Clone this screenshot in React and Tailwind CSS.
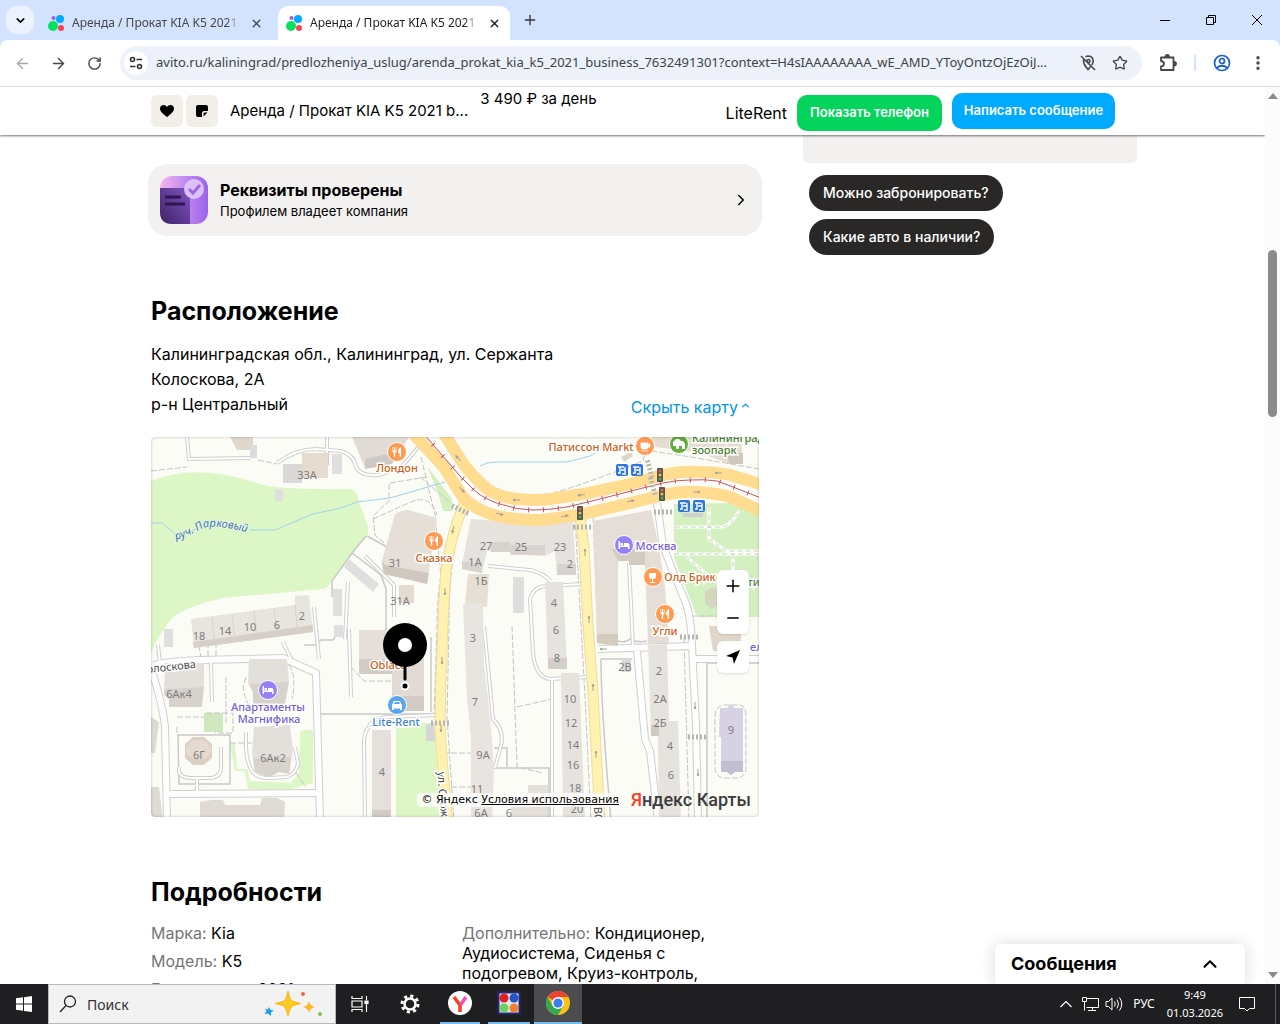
import { ChevronDown, ChevronRight, ChevronUp, Plus, Minus, Star, RotateCw, ArrowLeft, ArrowRight, X, EllipsisVertical } from "lucide-react";

const MAIN_ROAD = {
	upper: "M290 -8 L309 22 Q318 36 336 52 Q350 61 366 62 Q385 64 399 62 L432 57 L479 47 L512 38 Q530 34 546 35 Q565 35 579 38 L612 48",
	lower: "M258 -8 L292 29 L312 60 Q320 69 332 74 Q348 81 366 82 Q385 84 399 82 L432 77 L479 66 L512 58 Q530 54 546 55 Q565 56 579 60 L612 75",
	tram: "M272 -4 L309 39 L324 54 Q335 63 349 67 Q366 73 382 73 Q398 73 416 70 L449 62 L492 51 L512 46 Q526 43 539 43 Q553 42 566 44 L582 50 L610 61",
};

const YELLOW_STREETS = [
	"M314 66 Q302 90 295 132 Q293 160 292 189 L290 239 L289 289 Q291 330 297 384",
	"M429 80 L433 110 L437 189 L442 256 L449 384",
];

const WHITE_STREETS = [
	"M506 66 L512 109 Q522 135 532 159 Q540 175 541 209 L545 289 L547 384",
	"M447 212 L541 209",
	"M481 189 L482 211",
	"M486 214 L494 302 L499 314 L507 384",
	"M544 222 L610 222",
	"M4 228 Q8 225 49 223 L132 221 L165 236 L169 384",
	"M0 232 Q10 260 14 289 L16 384",
	"M16 357 L167 356",
	"M379 162 L382 215 Q384 240 399 242 L439 240",
	"M401 242 L401 384",
	"M333 189 L342 282 Q355 295 349 312 L344 331",
	"M36 0 L38 22 L99 21",
	"M126 26 Q145 12 165 12 L190 14 Q203 18 205 30 Q210 40 228 38 L250 30 Q258 22 268 9",
	"M214 119 L243 148",
	"M243 148 L243 180",
	"M337 129 L379 133 Q393 136 399 144",
	"M379 162 Q383 149 396 149 L432 147",
	"M197 145 L194 202",
	"M198 192 L200 260",
	"M218 290 Q213 295 213 305 L214 384",
	"M218 289 Q222 281 236 280 L286 278",
	"M95 295 Q94 320 99 330 Q103 341 117 341 L136 340 Q146 336 147 326 L144 310",
	"M478 126 L481 189",
	"M60 226 L61 265",
	"M132 205 L140 222",
	"M28 330 V335 Q30 341 40 341 H60 Q70 340 70 330 V310",
	"M46 341 V356",
	"M176 0 V28",
	"M163 170 L168 222",
	"M7 208 L9 226",
];

// everything up to this index, apart from the short link, is a full-width street
const WIDE_STREETS = 8;

const THIN_LINES = [
	"M169 277 L286 277",
	"M215 99 L201 116 L181 144 L181 160",
	"M216 99 L236 110",
	"M201 116 L230 138 L235 152 L235 200",
	"M27 298 H79 V347 H28 Z",
	"M450 222 H481 M450 222 Q450 270 460 384",
	"M556 226 V384",
	"M337 331 H398 V384",
	"M343 311 H356 V330",
	"M280 200 V275",
	"M555 226 H608",
	"M153 208 H164 L170 203 H182 L185 198 H192",
	"M467 204 Q475 206 479 202 Q486 206 496 204",
];

const DASHED_LINES = [
	"M300 92 Q286 140 286 189 L283 280",
	"M310 80 Q298 125 298 189 L296 280 L303 384",
	"M424 80 L434 260 L440 384",
	"M442 80 L447 200",
	"M0 34 L36 30 M107 23 L126 27",
	"M270 20 L284 78 L290 140",
	"M239 46 L276 40 M238 47 L238 64 L222 79 L224 98 L233 106 M222 82 L262 64 Q280 58 286 78",
	"M361 189 L366 330 L392 336",
	"M366 270 L401 262",
	"M533 200 L538 384",
	"M57 205 L57 230 M65 205 L65 226 M75 240 V288 M26 290 V298 M26 280 H53",
	"M338 56 Q360 60 399 57 Q440 45 492 24 L495 14 M500 14 L540 20 L608 32",
	"M318 60 Q350 82 399 84 L440 80",
	"M564 280 Q564 270 572 268 H588 Q595 268 595 280 V330 Q595 341 585 341 H574 Q564 341 564 330 Z",
	"M540 179 L578 179",
	"M292 316 H330 M300 350 H320",
	"M200 230 L213 244 L240 244 L245 236",
	"M79 306 H105",
	"M55 276 H82 V296 H64 M95 240 L92 250 Q94 262 98 268 M138 228 Q146 240 141 262",
	"M145 336 L155 350 M48 208 L50 222",
	"M269 40 L300 66",
];

const BUILDINGS = [
	{ points: "79,0 102,0 102,13 86,13", fill: "#e0d8cc" },
	{ points: "99,8 106,8 106,21 99,21", fill: "#dcdcdc" },
	{ points: "151,16 177,16 177,41 151,41", fill: "#e5dccf" },
	{ points: "132,27 151,27 151,46 132,46", fill: "#dbd8d8" },
	{ points: "181,17 191,17 191,37 181,37", fill: "#dfdfdf" },
	{ points: "124,52 132,52 132,64 124,64", fill: "#dedede" },
	{ points: "201,0 258,0 241,27 214,31", fill: "#e0dbd5" },
	{ points: "214,22 246,15 241,27 214,32", fill: "#cec9c4" },
	{ points: "244,77 250,74 257,73 286,81 276,146 232,137 231,124", fill: "#e6dfd7" },
	{ points: "231,124 234,128 278,136 276,147 233,137", fill: "#d0c7bf" },
	{ points: "248,148 263,148 263,166 248,166", fill: "#e5dccf" },
	{ points: "198,122 228,147 222,155 193,130", fill: "#dfdfdf" },
	{ points: "182,152 191,152 191,179 182,179", fill: "#dfdfdf" },
	{ points: "40,182 144,168 144,159 158,158 162,195 43,211", fill: "#e8e4de" },
	{ points: "42,205 162,188 162,195 43,211", fill: "#d6cfc8" },
	{ points: "13,192 22,192 22,210 13,210", fill: "#dfdfdf" },
	{ points: "183,188 192,188 192,200 183,200", fill: "#dfdfdf" },
	{ points: "14,226 53,226 53,252 50,258 50,270 18,270 18,262 13,255", fill: "#e3dfda" },
	{ points: "14,252 53,250 51,270 18,270 18,262 13,258", fill: "#d8d2cd" },
	{ points: "98,222 136,222 138,245 134,252 134,267 102,267 102,255 97,246", fill: "#e3dfda" },
	{ points: "98,247 138,245 134,267 102,267 102,255", fill: "#d8d2cd" },
	{ points: "42,300 53,300 61,307 61,321 53,328 42,328 34,321 34,307", fill: "#dccfc5" },
	{ points: "42,303 53,303 60,310 60,316 53,322 42,322 35,316 35,310", fill: "#e4dad0" },
	{ points: "103,290 139,288 142,314 138,337 128,335 118,340 104,335 101,315", fill: "#e3dfda" },
	{ points: "102,322 140,320 138,337 128,335 118,340 104,335", fill: "#d8d2cd" },
	{ points: "49,365 60,363 72,363 74,368 109,368 111,361 126,361 134,365 133,384 49,384", fill: "#e0dad5" },
	{ points: "0,280 8,285 4,316 0,316", fill: "#dedad6" },
	{ points: "0,350 8,350 12,384 0,384", fill: "#dedad6" },
	{ points: "221,293 240,293 240,384 221,384", fill: "#e6e0dc" },
	{ points: "221,373 240,373 240,384 221,384", fill: "#d2cbc7" },
	{ points: "208,193 241,193 241,237 208,237", fill: "#e6dfd8" },
	{ points: "208,222 241,222 241,237 208,237", fill: "#d3cbc5" },
	{ points: "241,196 273,196 273,274 241,274", fill: "#e1dad5" },
	{ points: "241,259 273,259 273,274 241,274", fill: "#d3cbc5" },
	{ points: "275,288 283,286 284,304 275,304", fill: "#d6d6d6" },
	{ points: "320,82 366,85 422,85 425,137 406,137 404,114 394,119 360,117 359,114 336,114 331,136 311,132 312,122", fill: "#e6e2dd" },
	{ points: "340,105 359,105 359,108 394,108 394,118 360,118 359,115 340,115", fill: "#d8d3ce" },
	{ points: "406,127 425,127 425,138 406,138", fill: "#d8d3ce" },
	{ points: "311,124 331,128 331,136 311,132", fill: "#d8d3ce" },
	{ points: "317,137 338,137 336,170 314,167", fill: "#e6dfd4" },
	{ points: "312,167 332,167 333,228 337,261 340,292 343,331 341,384 320,384 320,300 316,262", fill: "#e8e4df" },
	{ points: "362,140 373,140 373,176 362,176", fill: "#dedede" },
	{ points: "394,145 412,145 416,231 397,231", fill: "#e6e2dd" },
	{ points: "397,221 416,221 416,232 397,232", fill: "#d4cfca" },
	{ points: "410,236 428,236 434,384 412,384", fill: "#e6e2dd" },
	{ points: "377,348 397,348 397,384 360,384 360,370 377,370", fill: "#e6e0da" },
	{ points: "442,84 500,73 508,110 514,150 518,206 497,206 494,128 467,122 467,209 446,206", fill: "#e5ded6" },
	{ points: "461,112 494,112 494,128 478,128 478,124 467,124", fill: "#d3cac0" },
	{ points: "446,197 467,197 467,209 446,206", fill: "#d3cac0" },
	{ points: "497,208 516,207 518,284 527,284 530,384 508,384 507,298 500,298", fill: "#e6e2dd" },
	{ points: "500,288 508,288 508,299 500,299", fill: "#d0cac5" },
	{ points: "471,222 480,222 480,235 471,235", fill: "#d8d8d8" },
	{ points: "558,189 590,189 590,214 562,214", fill: "#e0d6ca" },
	{ points: "569,271 576,271 580,267 584,271 592,271 592,335 584,335 580,338 576,335 570,335 570,300 568,300", fill: "#d6d2e3" },
	{ points: "570,324 592,324 592,335 584,335 580,338 576,335 570,335", fill: "#c3bfd2" },
	{ points: "500,0 590,0 592,27 578,27 550,16 505,10", fill: "#e3dccf" },
	{ points: "576,16 592,16 592,27 578,27", fill: "#cfc8bd" },
	{ points: "470,20 480,15 482,19 473,25", fill: "#dcd6cc" },
	{ points: "532,76 552,76 552,80 532,80", fill: "#cfcfcf" },
	{ points: "554,154 562,150 568,155 568,168 560,172 554,167", fill: "#d5d6c0" },
];

const HOUSE_NUMBERS = [
	["33А", 156, 42], ["31", 244, 130], ["31А", 249, 168], ["27", 335, 113], ["25", 370, 114], ["23", 409, 114],
	["1А", 324, 129], ["2", 419, 131], ["1Б", 330, 148], ["4", 403, 170], ["3", 322, 205], ["6", 405, 197],
	["8", 406, 225], ["2", 151, 183], ["6", 126, 192], ["10", 99, 194], ["14", 74, 198], ["18", 48, 203],
	["7", 324, 269], ["9А", 332, 322], ["11", 326, 356], ["10", 419, 266], ["12", 420, 290], ["14", 422, 312],
	["16", 422, 332], ["18", 424, 355], ["20", 426, 376], ["6А", 330, 380], ["6", 358, 380], ["2В", 474, 234],
	["2", 508, 238], ["2А", 509, 266], ["2Б", 509, 290], ["4", 519, 313], ["6", 520, 342], ["9", 580, 297],
	["6Ак4", 28, 261], ["6Г", 48, 322], ["6Ак2", 122, 325], ["4", 231, 339],
];

const PLACES = [
	{ name: "Лондон", x: 246, y: 35, cx: 246, cy: 15, kind: "food" },
	{ name: "Сказка", x: 283, y: 125, cx: 283, cy: 104, kind: "food" },
	{ name: "Угли", x: 514, y: 198, cx: 514, cy: 177, kind: "food" },
	{ name: "Патиссон Markt", x: 440, y: 14, cx: 494, cy: 9, kind: "cafe" },
	{ name: "Олд Брик", x: 539, y: 144, cx: 502, cy: 140, kind: "bar" },
	{ name: "Москва", x: 505, y: 113, cx: 473, cy: 108, kind: "hotel" },
	{ name: "Апартаменты", x: 117, y: 274, cx: 117, cy: 253, kind: "hotel" },
	{ name: "Lite-Rent", x: 245, y: 289, cx: 246, cy: 268, kind: "car" },
];

const PLACE_COLORS = {
	food: ["#ff9a52", "#d0601a"],
	cafe: ["#ff9a52", "#d0601a"],
	bar: ["#ff9a52", "#d0601a"],
	hotel: ["#9580f5", "#7660d8"],
	car: ["#5aa5f0", "#3a86d0"],
};

const PLACE_GLYPHS = {
	food: <path d="M-4.500 -5 V-1 Q-4.500 0.500 -3.200 0.500 V5 H-1.800 V0.500 Q-0.500 0.500 -0.500 -1 V-5 H-1.300 V-1.500 H-2.100 V-5 H-2.900 V-1.500 H-3.700 V-5 Z M4 -5 Q1 -4 1 1 H2.600 V5 H4 Z" fill="#fff" />,
	cafe: <path d="M-4 -3 h7 v4 q0 2 -2 2 h-3 q-2 0 -2 -2 z M3 -2 h2 v3 h-2 M-4 5 h7" fill="#fff" stroke="#fff" strokeWidth="0.800" />,
	bar: <path d="M-4 -4 h7 v3 q0 3 -3 3 v3 h2 v1 h-5 v-1 h2 v-3 q-3 0 -3 -3 z" fill="#fff" />,
	hotel: <path d="M-5.500 -4 V4 H-4 V2 H4 V4 H5.500 V0 Q5.500 -2 3.500 -2 H0 V0.500 H-4 V-4 Z M-3.500 -2 h2.500 v2 h-2.500 z" fill="#fff" />,
	car: <path d="M-5 0 l2 -4 h6 l2 4 v5 h-2 v-1.500 h-6 v1.500 h-2 z M-3 -1 h6 l-1 -2 h-4 z" fill="#fff" fillRule="evenodd" />,
};

const TRAFFIC_LIGHTS = [[509, 38], [511, 57], [429, 76]];
const TRAM_STOPS = [[471, 33], [486, 33], [533, 69], [548, 69]];
const CROSSINGS = [[426, 90, 0], [304, 73, 25], [493, 33, 75], [496, 50, 75], [507, 75, 0], [284, 286, 0], [533, 200, 0], [541, 300, 0]];
const ROAD_ARROWS = [[294, 155, 180], [291, 224, 180], [290, 292, 180], [302, 93, 195], [434, 115, 0], [438, 182, 0], [442, 250, 0], [445, 317, 0], [307, 21, -45], [311, 53, 135], [349, 77, 105], [414, 79, 80], [480, 64, 80], [365, 63, -90], [430, 58, -97], [546, 55, 90], [567, 36, -90], [544, 269, 180], [547, 336, 180], [452, 212, -90]];

const isWide = (i) => i < WIDE_STREETS && i !== 2;

function CityMap() {
	return (
		<svg viewBox="0 0 608 380" preserveAspectRatio="xMidYMid slice" className="block h-full w-full font-['Noto_Sans',sans-serif]">
			<rect width="608" height="380" fill="#fbfcf6" />
			<path d="M0 44 Q28 33 60 36 Q82 38 109 47 Q130 53 199 52 Q206 53 208 65 L217 89 Q218 96 216 99 L201 116 L181 144 Q177 151 172 152 L72 161 Q42 168 26 177 Q14 186 0 215 Z" fill="#dcf7c5" />
			<path d="M523 67 L580 66 Q598 68 608 79 V180 H546 L523 120 Z M276 29 L301 62 L302 74 L292 74 L287 56 Z" fill="#d5f0c0" />
			<path d="M245 286 H283 L290 384 H245 Z M149 296 Q150 293 154 293 H159 Q162 293 162 296 V346 L140 352 H97 L94 334 H84 L79 306 H84 L86 332 H96 L99 344 L140 346 L148 336 Z" fill="#dcf7c5" />
			<path d="M53 276 H72 V295 H53 Z" fill="#cfe8c0" />
			<path d="M524 90 H572 Q582 86 588 74 M558 70 V102 L576 114 H608 M523 117 H608 M582 117 V145 M535 119 L570 150" fill="none" stroke="#fff" strokeWidth="3" />
			<path d="M524 90 H572 Q582 86 588 74 M558 70 V102 L576 114 H608 M523 117 H608 M582 117 V145 M535 119 L570 150" fill="none" stroke="#c2d0b8" strokeWidth="1" strokeDasharray="5 3" />
			<path d="M0 86 H11 L24 97 L40 95 Q60 80 70 86 M99 93 H124 L162 77 L190 71 L206 65 L239 61 L294 45 M329 29 Q335 25 345 25 H416 L439 19 L456 9" fill="none" stroke="#9fd0f0" strokeWidth="1" />
			{THIN_LINES.map((d) => (
				<path key={d} d={d} fill="none" stroke="#c9c9c9" strokeWidth="1.500" />
			))}
			{DASHED_LINES.map((d) => (
				<path key={d} d={d} fill="none" stroke="#c4c4c4" strokeWidth="1" strokeDasharray="6 2" />
			))}
			{WHITE_STREETS.map((d, i) => (
				<path key={d} d={d} fill="none" stroke="#cfcfcf" strokeWidth={isWide(i) ? 8 : 4} />
			))}
			{WHITE_STREETS.map((d, i) => (
				<path key={d} d={d} fill="none" stroke="#ffffff" strokeWidth={isWide(i) ? 6 : 2} />
			))}
			{BUILDINGS.map((b) => (
				<polygon key={b.points} points={b.points} fill={b.fill} />
			))}
			<path d="M61 180 L64 208 M81 177 L84 205 M103 174 L106 202 M123 171 L127 199 M144 168 L147 197" stroke="#d8d3cd" strokeWidth="1" />
			{YELLOW_STREETS.map((d) => (
				<g key={d} fill="none">
					<path d={d} stroke="#eedc9c" strokeWidth="11" />
					<path d={d} stroke="#fff2b0" strokeWidth="9" />
				</g>
			))}
			<path d={MAIN_ROAD.tram} fill="none" stroke="#fcfcf8" strokeWidth="18" />
			<path d={MAIN_ROAD.upper} fill="none" stroke="#ffdc90" strokeWidth="12" />
			<path d={MAIN_ROAD.lower} fill="none" stroke="#ffdc90" strokeWidth="12" />
			<path d={MAIN_ROAD.tram} fill="none" stroke="#c95560" strokeWidth="1" />
			<path d={MAIN_ROAD.tram} fill="none" stroke="#c95560" strokeWidth="5" strokeDasharray="1 14" />
			{CROSSINGS.map(([x, y, r]) => (
				<path key={`${x}-${y}`} transform={`rotate(${r} ${x + 6} ${y})`} d={`M${x - 4} ${y} h20`} stroke="#b5b5b5" strokeWidth="5" strokeDasharray="2 2" />
			))}
			{ROAD_ARROWS.map(([x, y, r]) => (
				<path key={`${x}-${y}`} transform={`translate(${x} ${y}) rotate(${r})`} d="M0 4 V-1 M-1 -1 L0 -3 L1 -1 Z" fill="#9a9a90" stroke="#a5a598" strokeWidth="1" />
			))}
			<g fontSize="11" fill="#7d7d7d" textAnchor="middle">
				{HOUSE_NUMBERS.map(([label, x, y]) => (
					<text key={`${label}-${x}-${y}`} x={x} y={y}>{label}</text>
				))}
			</g>
			{TRAM_STOPS.map(([x, y]) => (
				<g key={`${x}-${y}`} transform={`translate(${x} ${y})`}>
					<rect x="-6" y="-6" width="12" height="12" rx="2" fill="#2f75e0" />
					<path d="M-4 -3 H2 M-2 -3 V3 H-4 M-1 0 H3 M3 -3 V3 M0 4 H4" fill="none" stroke="#fff" strokeWidth="1.400" />
				</g>
			))}
			{TRAFFIC_LIGHTS.map(([x, y]) => (
				<g key={`${x}-${y}`} transform={`translate(${x} ${y})`}>
					<rect x="-3" y="-7" width="6" height="14" rx="1" fill="#555" />
					<circle cy="-4" r="1.500" fill="#e06050" />
					<circle r="1.500" fill="#e8c040" />
					<circle cy="4" r="1.500" fill="#40b050" />
				</g>
			))}
			<defs>
				<path id="stream" d="M25 103 Q38 99 50 92 Q62 86 99 96" />
				<path id="street-left" d="M287 335 Q287 360 293 400" />
			</defs>
			<text fontSize="11" fontStyle="italic" fill="#3f74b8" stroke="#e8f8dc" strokeWidth="2" paintOrder="stroke">
				<textPath href="#stream">руч. Парковый</textPath>
			</text>
			<g fontSize="11" fill="#4a4a4a" stroke="#fff" strokeWidth="3" paintOrder="stroke">
				<text transform="translate(-4 236) rotate(-6)">олоскова</text>
				<text><textPath href="#street-left">ул. Серж</textPath></text>
				<text transform="translate(443 370) rotate(87)">ВО</text>
			</g>
			{PLACES.map((p) => (
				<g key={p.name}>
					<circle cx={p.cx} cy={p.cy} r="9.500" fill={PLACE_COLORS[p.kind][0]} stroke="#fff" strokeWidth="1" />
					<g transform={`translate(${p.cx} ${p.cy})`}>{PLACE_GLYPHS[p.kind]}</g>
					<text x={p.x} y={p.y} fontSize="11" fontWeight="500" textAnchor="middle" fill={PLACE_COLORS[p.kind][1]} stroke="#fff" strokeWidth="3" paintOrder="stroke">
						{p.name}
					</text>
				</g>
			))}
			<g fontSize="11" fontWeight="500" stroke="#fff" strokeWidth="3" paintOrder="stroke">
				<text x="118" y="286" textAnchor="middle" fill="#7660d8">Магнифика</text>
				<text x="219" y="232" fill="#d0601a">Oblaco</text>
				<text x="541" y="5" fill="#4a8030">Калининград</text>
				<text x="541" y="17" fill="#4a8030">зоопарк</text>
				<text x="591" y="149" fill="#5a8050">сти</text>
				<text x="599" y="214" fill="#7660d8">ел</text>
			</g>
			<circle cx="528" cy="7" r="9.500" fill="#62ad3c" stroke="#fff" strokeWidth="1" />
			<path d="M522 9 v-4 l3 -3 h3 l2 2 h2 l2 3 v5 h-3 v-3 h-3 v3 h-3 v-3 z" fill="#fff" />
			{/* listing pin */}
			<circle cx="254" cy="208" r="22" fill="#000" />
			<circle cx="254" cy="208" r="7" fill="#fff" />
			<path d="M254 228 V242" stroke="#000" strokeWidth="3" strokeLinecap="round" />
			<circle cx="254" cy="249" r="3.500" fill="#000" stroke="#fff" strokeWidth="2" />
		</svg>
	);
}

function AvitoLogo() {
	return (
		<svg viewBox="0 0 16 16" className="size-4 shrink-0">
			<circle cx="5" cy="11" r="5" fill="#04e061" />
			<circle cx="12" cy="4" r="4" fill="#00aaff" />
			<circle cx="13" cy="13" r="3" fill="#ff4053" />
			<circle cx="5.500" cy="3" r="2" fill="#965eeb" />
		</svg>
	);
}

function BrowserTab({ active }) {
	return (
		<div
			className={
				active
					? "flex h-[34px] w-[232px] items-center gap-2 rounded-t-[10px] bg-white px-2 text-[#1f1f1f]"
					: "flex h-[34px] w-[232px] items-center gap-2 px-2 text-[#474747]"
			}
		>
			<AvitoLogo />
			<span className="flex-1 overflow-hidden whitespace-nowrap text-xs [mask-image:linear-gradient(to_right,black_92%,transparent)]">
				Аренда / Прокат KIA K5 2021 b
			</span>
			<button type="button" aria-label="Закрыть вкладку" className="grid size-4 place-items-center">
				<X size={13} strokeWidth={2.5} />
			</button>
		</div>
	);
}

function TabStrip() {
	return (
		<div className="flex h-10 shrink-0 items-end bg-[#d3e3fd] font-['Noto_Sans','Open_Sans',sans-serif]">
			<button type="button" aria-label="Поиск вкладок" className="mb-1.5 ml-1.5 grid size-7 place-items-center self-end rounded-[10px] bg-[#ecf2fe]">
				<ChevronDown size={13} strokeWidth={3} />
			</button>
			<div className="ml-1.5 flex gap-1.5">
				<BrowserTab />
				<BrowserTab active />
			</div>
			<button type="button" aria-label="Новая вкладка" className="mb-1.5 ml-1.5 grid size-7 place-items-center text-[#333]">
				<Plus size={16} strokeWidth={2} />
			</button>
			<div className="mb-1.5 ml-auto flex">
				<button type="button" aria-label="Свернуть" className="grid h-7 w-[46px] place-items-center">
					<svg viewBox="0 0 10 10" className="size-2.5"><path d="M0 5.500 H10" stroke="#000" /></svg>
				</button>
				<button type="button" aria-label="Развернуть" className="grid h-7 w-[46px] place-items-center">
					<svg viewBox="0 0 10 10" className="size-2.5"><path d="M0.500 2.500 H7.500 V9.500 H0.500 Z M2.500 2 V0.500 H9.500 V7.500 H8" fill="none" stroke="#000" /></svg>
				</button>
				<button type="button" aria-label="Закрыть" className="grid h-7 w-[46px] place-items-center">
					<svg viewBox="0 0 10 10" className="size-2.5"><path d="M0 0 L10 10 M10 0 L0 10" stroke="#000" /></svg>
				</button>
			</div>
		</div>
	);
}

function Toolbar() {
	return (
		<div className="shrink-0 bg-[#d3e3fd]">
			<div className="flex h-[47px] items-center rounded-t-lg border-b border-[#dcdcdc] bg-white pr-3 text-[#474747]">
				<button type="button" aria-label="Назад" className="ml-3 grid size-5 place-items-center text-[#a8a8a8]"><ArrowLeft size={17} /></button>
				<button type="button" aria-label="Вперёд" className="ml-4 grid size-5 place-items-center"><ArrowRight size={17} /></button>
				<button type="button" aria-label="Обновить" className="ml-4 grid size-5 place-items-center"><RotateCw size={15} strokeWidth={2.25} /></button>
				<div className="ml-4 flex h-[34px] min-w-0 flex-1 items-center rounded-full bg-[#ecf1fa] pl-1">
					<span className="grid size-6 shrink-0 place-items-center rounded-full bg-white">
						<svg viewBox="0 0 16 16" className="size-4" fill="none" stroke="#333" strokeWidth="1.600">
							<circle cx="4.500" cy="4.500" r="2" />
							<path d="M8.500 4.500 H14 M2 11.500 H7.500" />
							<circle cx="11.500" cy="11.500" r="2" />
						</svg>
					</span>
					<input
						type="text"
						readOnly
						aria-label="Адресная строка"
						className="ml-2 min-w-0 flex-1 bg-transparent font-['Noto_Sans','Open_Sans',sans-serif] text-[13px] text-[#404347] outline-none"
						value="avito.ru/kaliningrad/predlozheniya_uslug/arenda_prokat_kia_k5_2021_business_7632491301?context=H4sIAAAAAAAA_wE_AMD_YToyOntzOjEzOiJ..."
					/>
					<button type="button" aria-label="Геолокация" className="ml-2 grid size-5 place-items-center">
						<svg viewBox="0 0 18 18" className="size-[18px]" fill="none" stroke="#474747" strokeWidth="1.600">
							<path d="M6.500 2.800 Q8 2 9.500 2 Q14 2.500 14.200 7 Q14.200 9 12.800 11 M4.500 5.500 Q4 10 9 15.500 L11.500 12.700 M2 2 L16 16" />
							<circle cx="9.500" cy="7" r="1.500" />
						</svg>
					</button>
					<button type="button" aria-label="В закладки" className="mx-3 grid size-5 place-items-center"><Star size={16} /></button>
				</div>
				<button type="button" aria-label="Расширения" className="ml-3.5 grid size-6 place-items-center">
					<svg viewBox="0 0 20 20" className="size-5" fill="none" stroke="#474747" strokeWidth="1.800">
						<path d="M3 4.500 H15.500 V17 H3 V13.500 Q6 13 6 10.700 Q6 8.500 3 8 Z" strokeLinejoin="round" />
						<path d="M7.500 4 Q7.500 2 9.300 2 Q11 2 11 4 M16 9 Q18 9 18 10.700 Q18 12.500 16 12.500" fill="#474747" />
					</svg>
				</button>
				<span className="ml-3.5 h-4 w-0.5 bg-[#d3e3fd]" />
				<button type="button" aria-label="Профиль" className="ml-4 grid size-5 place-items-center">
					<svg viewBox="0 0 18 18" className="size-[18px]" fill="none" stroke="#1a5fd0" strokeWidth="1.700">
						<circle cx="9" cy="9" r="7.500" />
						<circle cx="9" cy="7" r="2.500" />
						<path d="M3.500 14 Q9 9.500 14.500 14" />
					</svg>
				</button>
				<button type="button" aria-label="Меню" className="ml-4 grid size-5 place-items-center"><EllipsisVertical size={18} strokeWidth={2.5} /></button>
			</div>
		</div>
	);
}

function StickyHeader() {
	return (
		<header className="relative z-10 flex h-12 shrink-0 items-start bg-white pl-[151px] pr-[150px] shadow-[0_1px_2px_rgba(0,0,0,0.55)]">
			<button type="button" aria-label="В избранное" className="mt-2 grid size-8 shrink-0 place-items-center rounded-md bg-[#f2efe8]">
				<svg viewBox="0 0 14 12" className="h-3 w-3.5"><path d="M7 12 C3 9 0 6.500 0 3.500 C0 1.500 1.500 0 3.500 0 C5 0 6.400 0.800 7 2 C7.600 0.800 9 0 10.500 0 C12.500 0 14 1.500 14 3.500 C14 6.500 11 9 7 12 Z" /></svg>
			</button>
			<button type="button" aria-label="Заметка" className="ml-[3px] mt-2 grid size-8 shrink-0 place-items-center rounded-md bg-[#f2efe8]">
				<svg viewBox="0 0 12 12" className="size-3"><path d="M2 0 H10 Q12 0 12 2 V6 H8 Q6 6 6 8 V12 H2 Q0 12 0 10 V2 Q0 0 2 0 Z M7.500 11.500 V8.500 Q7.500 7.500 8.500 7.500 H11.500 Z" /></svg>
			</button>
			<span className="ml-3 mt-3 whitespace-nowrap text-[15px] leading-6">Аренда / Прокат KIA K5 2021 b...</span>
			<span className="ml-3 whitespace-nowrap text-[15px] leading-6">3 490 ₽ за день</span>
			<span className="ml-auto mt-3.5 text-base leading-6">LiteRent</span>
			<button type="button" className="ml-2.5 mt-2 h-9 w-[145px] shrink-0 rounded-[10px] bg-[#04d45c] text-[13px] font-semibold text-white">Показать телефон</button>
			<button type="button" className="ml-2.5 mt-1.5 h-9 w-[163px] shrink-0 rounded-[10px] bg-[#00aaff] text-[13px] font-semibold text-white">Написать сообщение</button>
		</header>
	);
}

function VerifiedCard() {
	return (
		<a href="#company" className="flex h-[72px] items-center rounded-[20px] bg-[#f2f1ef] px-3">
			<svg viewBox="0 0 48 48" className="size-12 shrink-0">
				<defs>
					<linearGradient id="badge" x1="0" y1="0" x2="1" y2="0">
						<stop offset="0" stopColor="#f5b5ec" />
						<stop offset="0.500" stopColor="#c58bf0" />
						<stop offset="1" stopColor="#9a62ea" />
					</linearGradient>
					<linearGradient id="sheet" x1="0" y1="1" x2="1" y2="0">
						<stop offset="0" stopColor="#3c2466" />
						<stop offset="1" stopColor="#8452c4" />
					</linearGradient>
				</defs>
				<rect width="48" height="48" rx="12" fill="url(#badge)" />
				<path d="M0 12 H25 Q30 12 30 17 V48 H12 Q0 48 0 36 Z" fill="url(#sheet)" />
				<path d="M5 21 H21 M5 28 H25" stroke="#2c174f" strokeWidth="3" />
				<circle cx="34" cy="13" r="10" fill="#dcc0f8" />
				<path d="M29 13 L33 17 L40 9" fill="none" stroke="#a066e6" strokeWidth="3" />
			</svg>
			<span className="ml-3 flex flex-1 flex-col pb-0.5">
				<span className="text-base font-bold leading-6">Реквизиты проверены</span>
				<span className="text-[13px] leading-[18px]">Профилем владеет компания</span>
			</span>
			<ChevronRight size={18} strokeWidth={2} />
		</a>
	);
}

function LocationSection() {
	return (
		<section className="mt-15 px-[3px]">
			<h2 className="text-[25px] font-bold leading-[30px]">Расположение</h2>
			<div className="mt-4 flex items-end justify-between pr-2">
				<div className="max-w-[410px] text-base leading-[25px]">
					<p>Калининградская обл., Калининград, ул. Сержанта Колоскова, 2А</p>
					<p>р-н Центральный</p>
				</div>
				<button type="button" className="flex items-center gap-0.5 text-base leading-5 text-[#0096f0]">
					Скрыть карту
					<ChevronUp size={11} strokeWidth={3} className="mb-1" />
				</button>
			</div>
			<div className="relative mt-5 h-[380px] overflow-hidden rounded-sm">
				<CityMap />
				<div className="pointer-events-none absolute inset-0 rounded-sm shadow-[inset_0_0_3px_rgba(0,0,0,0.25)]" />
				<div className="absolute right-2.5 top-[133px] flex w-8 flex-col overflow-hidden rounded-md bg-white shadow">
					<button type="button" aria-label="Приблизить" className="grid h-8 place-items-center"><Plus size={20} strokeWidth={1.8} /></button>
					<button type="button" aria-label="Отдалить" className="grid h-8 place-items-center"><Minus size={18} strokeWidth={1.8} /></button>
				</div>
				<button type="button" aria-label="Моё местоположение" className="absolute right-2.5 top-[204px] grid size-8 place-items-center rounded-md bg-white shadow">
					<svg viewBox="0 0 16 16" className="size-4"><path d="M15 1 L9 15 L7.500 8.500 L1 7 Z" /></svg>
				</button>
				<div className="absolute bottom-2 right-2 flex items-center gap-3">
					<span className="rounded-sm bg-white/80 pl-1 font-['DejaVu_Sans',sans-serif] text-[11px] leading-[14px]">
						© Яндекс <a href="#terms" className="underline">Условия использования</a>
					</span>
					<a href="#maps" className="font-['Roboto',sans-serif] text-lg font-medium leading-[18px] text-[#3c3c3c]">
						<span className="text-[#fc3f1d]">Я</span>ндекс Карты
					</a>
				</div>
			</div>
		</section>
	);
}

function Param({ label, value }) {
	return (
		<li className="text-base leading-5">
			<span className="text-[#757575]">{label}: </span>
			{value}
		</li>
	);
}

function DetailsSection() {
	return (
		<section className="mt-15 px-[3px]">
			<h2 className="text-[25px] font-bold leading-[30px]">Подробности</h2>
			<div className="mt-4 grid grid-cols-[311px_1fr]">
				<ul className="flex flex-col gap-2">
					<Param label="Марка" value="Kia" />
					<Param label="Модель" value="K5" />
					<Param label="Год выпуска" value="2021" />
				</ul>
				<ul className="max-w-[250px]">
					<Param label="Дополнительно" value="Кондиционер, Аудиосистема, Сиденья с подогревом, Круиз-контроль," />
				</ul>
			</div>
		</section>
	);
}

function QuickQuestions() {
	const questions = ["Можно забронировать?", "Какие авто в наличии?"];
	return (
		<aside className="w-[334px] shrink-0">
			<div className="h-7 rounded-b-md bg-[#f2f1ef]" />
			<div className="mt-3 flex flex-col items-start gap-2 pl-1.5">
				{questions.map((q) => (
					<button key={q} type="button" className="h-9 rounded-full bg-[#292827] px-3.5 text-sm font-medium text-white">
						{q}
					</button>
				))}
			</div>
		</aside>
	);
}

function Scrollbar() {
	return (
		<div className="flex w-[15px] shrink-0 flex-col items-center bg-[#fcfcfc] py-1.5">
			<svg viewBox="0 0 10 6" className="h-1.5 w-2.5"><path d="M0 6 L5 0 L10 6 Z" fill="#8b8b8b" /></svg>
			<div className="mt-[151px] h-[167px] w-[9px] rounded-full bg-[#8b8b8b]" />
			<svg viewBox="0 0 10 6" className="mt-auto h-1.5 w-2.5"><path d="M0 0 L5 6 L10 0 Z" fill="#8b8b8b" /></svg>
		</div>
	);
}

function Taskbar() {
	return (
		<footer className="flex h-10 shrink-0 items-stretch bg-[#1f1f22] font-['Noto_Sans','Open_Sans',sans-serif] text-white">
			<button type="button" aria-label="Пуск" className="grid w-12 place-items-center">
				<svg viewBox="0 0 16 16" className="size-4" fill="#fff"><path d="M0 2.300 L7 1.300 V7.600 H0 Z M8 1.200 L16 0 V7.600 H8 Z M0 8.500 H7 V14.800 L0 13.800 Z M8 8.500 H16 V16 L8 14.900 Z" /></svg>
			</button>
			<label className="flex w-[288px] items-center border border-[#b8b8b8] bg-[#f2f2f2] px-2.5">
				<svg viewBox="0 0 18 18" className="size-[18px] shrink-0" fill="none" stroke="#222" strokeWidth="1.300"><circle cx="11" cy="6.500" r="5.500" /><path d="M7 10.500 L1 17" /></svg>
				<input type="text" placeholder="Поиск" className="ml-2.5 min-w-0 flex-1 bg-transparent text-[14px] text-[#333] outline-none placeholder:text-[#333]" />
				<svg viewBox="0 0 62 26" className="h-[26px] w-[62px] shrink-0">
					<path d="M25 0 Q27 9 29 10 Q31 11 38 12.500 Q31 14 29 15 Q27 17 25 25 Q23 17 21 15 Q19 14 12 12.500 Q19 11 21 10 Q23 9 25 0 Z" fill="#fdc921" stroke="#f5b81c" strokeWidth="1" />
					<path d="M46 10 Q47 15 52 16 Q47 17 46 22 Q45 17 40 16 Q45 15 46 10 Z" fill="#fbb92a" />
					<path d="M6 16 L7.500 19 L11 19.500 L8 21.500 L8 25 L5 22.500 L1.500 23 L3.500 20 L2 17.500 L5 18.500 Z" fill="#18a0e8" />
					<circle cx="40" cy="3" r="2" fill="#f06a35" />
					<circle cx="57" cy="23" r="2" fill="#7cc242" />
				</svg>
			</label>
			<button type="button" aria-label="Представление задач" className="grid w-12 place-items-center">
				<svg viewBox="0 0 18 16" className="h-4 w-[18px]" fill="none" stroke="#fff" strokeWidth="1.200"><path d="M1 0 V2.500 H11 V0 M1 5 H11 V11 H1 Z M1 16 V13.500 H11 V16 M15.500 0 V4 M15.500 8 V16" /><path d="M14 5 H17 V7.500 H14 Z" fill="#fff" /></svg>
			</button>
			<button type="button" aria-label="Параметры" className="ml-0.5 grid w-12 place-items-center">
				<svg viewBox="0 0 20 20" className="size-5" fill="none" stroke="#fff"><circle cx="10" cy="10" r="5.500" strokeWidth="2.500" /><circle cx="10" cy="10" r="8" strokeWidth="3" strokeDasharray="3.140 3.140" /></svg>
			</button>
			<button type="button" aria-label="Яндекс Браузер" className="ml-1.5 grid w-10 place-items-center border-b-2 border-[#76b9ed]">
				<svg viewBox="0 0 24 24" className="size-6">
					<circle cx="12" cy="12" r="12" fill="#fff" />
					<path d="M12 21 V14 L6 6 M12 14 L13.500 12" fill="none" stroke="#fc3f1d" strokeWidth="3.500" />
					<path d="M12.500 14 L18 6" stroke="#f050b8" strokeWidth="3.500" />
				</svg>
			</button>
			<button type="button" aria-label="Программа" className="ml-2 grid w-[42px] place-items-center border-b-2 border-[#76b9ed]">
				<svg viewBox="0 0 24 24" className="size-6">
					<rect x="1.500" y="1.500" width="21" height="21" fill="#dfe6f0" stroke="#26267c" strokeWidth="2" />
					<circle cx="7" cy="7" r="4.500" fill="#e02020" />
					<circle cx="17" cy="7" r="4.500" fill="#2455c0" />
					<circle cx="7" cy="17" r="4.500" fill="#6cd060" />
					<circle cx="17" cy="17" r="4.500" fill="#f08030" />
				</svg>
			</button>
			<button type="button" aria-label="Google Chrome" className="ml-1 grid w-12 place-items-center border-b-2 border-[#76b9ed] bg-[#4c4c50]">
				<svg viewBox="0 0 24 24" className="size-6">
					<circle cx="12" cy="12" r="12" fill="#fbc116" />
					<path d="M12 12 L1.600 6 A12 12 0 0 1 22.400 6 H12 Z" fill="#ea4335" />
					<path d="M1.600 6 A12 12 0 0 0 12 24 L17.200 15 L12 12 L6.800 15 Z" fill="#34a853" />
					<circle cx="12" cy="12" r="6" fill="#fff" />
					<circle cx="12" cy="12" r="4.600" fill="#3b7df0" />
				</svg>
			</button>
			<div className="ml-auto flex items-center">
				<svg viewBox="0 0 12 8" className="h-2 w-3" fill="none" stroke="#fff" strokeWidth="1.200"><path d="M0.500 7 L6 1.500 L11.500 7" /></svg>
				<svg viewBox="0 0 17 14" className="ml-2.5 h-3.5 w-[17px]" fill="none" stroke="#fff"><path d="M5 1.500 H16.500 V10.500 H4.500 M10.500 11 V13 M6 13.500 H14 M0.500 0.500 H4.500 V4.500 H0.500 Z M2.500 5 V13.500" /></svg>
				<svg viewBox="0 0 18 16" className="ml-1.5 h-4 w-[18px]" fill="none" stroke="#fff"><path d="M1 5.500 H3.500 L7 2 V14 L3.500 10.500 H1 Z M9.500 5.500 Q11 8 9.500 10.500 M12 3.500 Q15 8 12 12.500 M14.500 1.500 Q19 8 14.500 14.500" /></svg>
				<span className="ml-2.5 text-xs">РУС</span>
				<div className="ml-3 text-center text-[11px] leading-[18px]">
					<div>9:49</div>
					<div>01.03.2026</div>
				</div>
				<svg viewBox="0 0 16 16" className="ml-4 size-4" fill="none" stroke="#fff"><path d="M0.500 1.500 H15.500 V12.500 H10.500 L8 15 L5.500 12.500 H0.500 Z" /></svg>
				<span className="ml-5 mr-1 h-10 w-px bg-[#5a5a5c]" />
			</div>
		</footer>
	);
}

export default function App() {
	return (
		<div className="flex h-screen flex-col overflow-hidden bg-white text-black">
			<TabStrip />
			<Toolbar />
			<div className="flex min-h-0 flex-1">
				<div className="relative flex min-w-0 flex-1 flex-col overflow-hidden font-['Inter',sans-serif]">
					<StickyHeader />
					<div className="flex min-h-0 flex-1 gap-[41px] overflow-hidden pl-37 pr-32">
						<main className="min-w-0 flex-1 pt-[29px]">
							<VerifiedCard />
							<LocationSection />
							<DetailsSection />
						</main>
						<QuickQuestions />
					</div>
					<button type="button" className="absolute bottom-0 right-5 flex h-10 w-[250px] items-center justify-between rounded-t-md bg-white pl-4 pr-6 text-lg font-bold shadow-[0_0_16px_rgba(0,0,0,0.15)]">
						Сообщения
						<ChevronUp size={22} strokeWidth={2.25} />
					</button>
				</div>
				<Scrollbar />
			</div>
			<Taskbar />
		</div>
	);
}
